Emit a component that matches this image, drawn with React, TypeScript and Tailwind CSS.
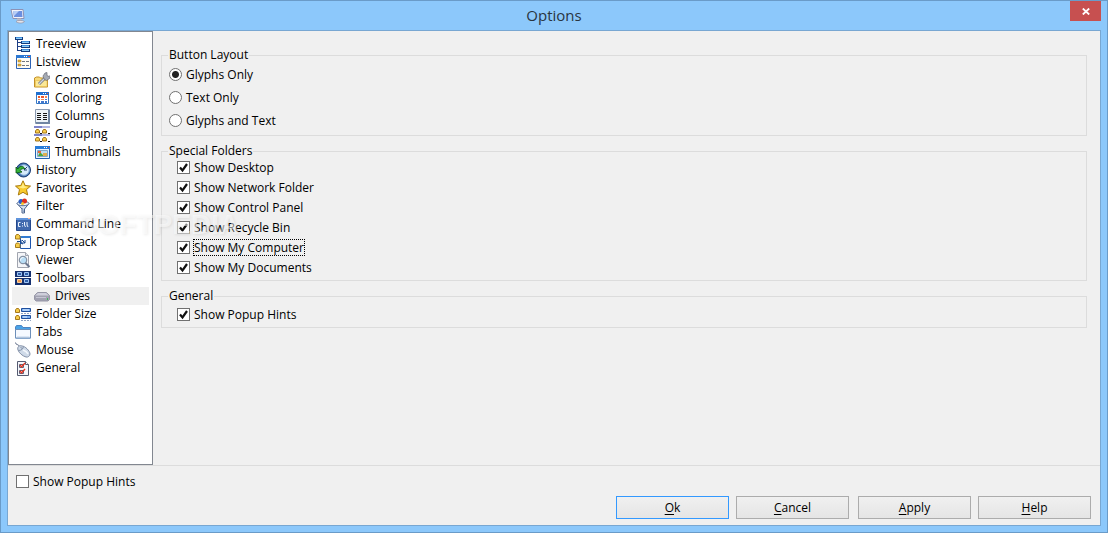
import React, { useState } from 'react';

const icons: Record<string, React.ReactNode> = {
  treeview: (
    <>
      <path d="M2.500 3v11.500M2 6.500h4M2 10.500h4M2 14.500h4" stroke="#1d3f86" fill="none" />
      <path d="M0 1h8v3H0zM6 5h9v3H6zM6 9h9v3H6zM6 13h9v3H6z" fill="#123a7c" />
      <path d="M1 1h6v1H1zM7 5h7v1H7zM7 9h7v1H7zM7 13h7v1H7z" fill="#3f8ede" />
      <path d="M1 2h6v1H1zM7 6h7v1H7zM7 10h7v1H7zM7 14h7v1H7z" fill="#8ccbf5" />
    </>
  ),
  listview: (
    <>
      <path d="M1.500 1.500h14v13h-14z" fill="#fdfbf4" stroke="#2d62b4" />
      <path d="M1 1h15v3H1z" fill="#2b78d4" />
      <path d="M9 2h1v1H9zM11 2h1v1h-1z" fill="#fff" />
      <path d="M13 2h2v1h-2z" fill="#f0502c" />
      <path d="M3 6h3v2H3zM3 10h3v2H3z" fill="#e8b53a" stroke="#a77e2a" strokeWidth=".5" />
      <path d="M7 7.500h7M7 11.500h7" stroke="#6f7480" strokeDasharray="3 1" />
    </>
  ),
  common: (
    <>
      <path d="M.5 15V6l2-1h3l1 1h7v9z" fill="#f8da78" stroke="#c39128" />
      <path d="M1.500 8.500h11.500v6H1.500z" fill="#fbe896" stroke="#e4b94a" strokeWidth=".6" />
      <path d="m5 12 6-6" stroke="#7c7f86" strokeWidth="3" />
      <path d="m5 12 6-6" stroke="#d0d4dc" strokeWidth="1.300" />
      <path d="M10 7 9 4l2-3 2-.5v3l2 1 1-1-.5 3-3 2z" fill="#a6abb5" stroke="#686c75" strokeWidth=".7" />
    </>
  ),
  coloring: (
    <>
      <path d="M2.500 2.500h12v11h-12z" fill="#fff" stroke="#3678c4" />
      <path d="M2 2h13v3H2z" fill="#1f6fd0" />
      <path d="M9 3h1v1H9zM11 3h1v1h-1z" fill="#fff" />
      <path d="M13 3h1v1h-1zM4 6h2v2H4zM7 6h3v2H7z" fill="#e9582f" />
      <path d="M11 6h2v2h-2zM4 9h2v1H4zM7 9h3v1H7z" fill="#f08557" />
      <path d="M11 9h2v1h-2zM4 11h2v2H4zM7 11h3v2H7zM11 11h2v2h-2z" fill="#4378cd" />
    </>
  ),
  columns: (
    <>
      <path d="M1.500 1.500h14v14h-14z" fill="#eef3f8" stroke="#8b9ab0" />
      <path d="M14 2h2v14H2v-2h12z" fill="#7186a3" />
      <path d="M3 5.500h4M3 7.500h4M3 9.500h4M3 11.500h4M9 5.500h4M9 7.500h4M9 9.500h4M9 11.500h4" stroke="#161616" />
    </>
  ),
  grouping: (
    <>
      <path d="M0 0h16v2H0zM0 8h16v2H0z" fill="#7c82c9" />
      <path d="M8 0h8v2H8zM8 8h8v2H8z" fill="#b3b7e2" />
      <path d="M1.500 7V5l1-1.500h2L5.500 5v2zM8.500 7V5l1-1.500h2l1 1.500v2zM1.500 15v-2l1-1.500h2l1 1.500v2zM8.500 15v-2l1-1.500h2l1 1.500v2z" fill="#f8ce4c" stroke="#a47418" />
      <path d="M6 7.500h2M14 7.500h2M6 15.500h2M14 15.500h2" stroke="#111" />
    </>
  ),
  thumbnails: (
    <>
      <path d="M1.500 2.500h14v12h-14z" fill="#eaf4fd" stroke="#2464b0" />
      <path d="M1 2h15v3H1z" fill="#267bd9" />
      <path d="M10 3h1v1h-1zM12 3h1v1h-1z" fill="#fff" />
      <path d="M14 3h1v1h-1z" fill="#ed5332" />
      <path d="M3.500 6.500h10v6h-10z" fill="#bbdff5" stroke="#83a8c4" />
      <path d="m4 12 2-4 3 3 2-2 2 3z" fill="#4fa43c" />
      <path d="M4 7h3v2H4z" fill="#e8653a" />
      <path d="M9 9h4v3H9z" fill="#e0ae51" />
    </>
  ),
  history: (
    <>
      <circle cx="8.500" cy="8" r="7" fill="#3e6fae" stroke="#1b3c74" />
      <circle cx="9" cy="8" r="5.300" fill="#d6eafa" stroke="#7fa8d4" />
      <path d="M9 8 12 5M9 8h3" stroke="#254272" />
      <path d="M1 5v6l6-1-2-1.500c1-2 3-2 5-1.500C8 3 4 4 3 7z" fill="#34b338" stroke="#08540f" strokeWidth=".8" />
    </>
  ),
  favorites: (
    <>
      <path d="m8 .8 2.200 4.700 5.300.6-4 3.500 1.200 5.400L8 12.300 3.300 15l1.200-5.400-4-3.500 5.300-.6z" fill="#f8ca2c" stroke="#a97a0c" strokeLinejoin="round" />
      <path d="m8 2.500 1.400 3.800 4 .6-5.400 1.700-5.400-1.700 4-.6z" fill="#ffec85" />
    </>
  ),
  filter: (
    <>
      <path d="M2 5.500 7 11v4h2.500v-4L14 5.500z" fill="#dbe5f2" stroke="#4c648c" />
      <ellipse cx="8" cy="5.500" rx="6" ry="2.200" fill="#eef4fb" stroke="#5b7198" />
      <circle cx="6" cy="3.500" r="2.500" fill="#2c60c5" />
      <circle cx="9.500" cy="3" r="2.500" fill="#dd2f20" />
      <circle cx="7.500" cy="5.500" r="1.500" fill="#f7c62b" />
      <path d="m7.500 10 1 4" stroke="#849bc0" />
    </>
  ),
  command: (
    <>
      <path d="M1.500 2.500h14v12h-14z" fill="#416aae" stroke="#24488d" />
      <path d="M1 2h15v2H1z" fill="#6094dc" />
      <path d="M13 2h2v1h-2z" fill="#f2b49a" />
      <path d="M5.500 6.500h-2v4h2M7.500 7v1M7.500 9.500v1M9.500 6v3l1 2M12 6v3l1 2" fill="none" stroke="#eef5ff" />
    </>
  ),
  drop: (
    <>
      <path d="M5.500 2.500h10v12h-10z" fill="#f8fbff" stroke="#1d55ad" />
      <path d="M5 2h11v2H5z" fill="#317bd2" />
      <path d="M.5 5V2l1-1.500h2L5 2v3zM.5 13.500v-3l1-1.500h2L5 10.500v3z" fill="#f6ce4b" stroke="#a67b1b" />
      <path d="M2 7.500h4M6 6v3l2 1M7 6l3 3M10 6v3H6" stroke="#16468f" fill="none" />
    </>
  ),
  viewer: (
    <>
      <path d="M2.500.5h8l3 3v12h-11z" fill="#f5f6f9" stroke="#a1a5af" />
      <path d="M10.500.5v3h3" fill="#dfe3e9" stroke="#a1a5af" />
      <circle cx="8" cy="8" r="3.700" fill="#b9def6" stroke="#8592a4" strokeWidth="1.200" />
      <path d="M5.500 8.500c0-2 1-3 3-3" fill="none" stroke="#fff" />
      <path d="m10.500 11 4 4" stroke="#6a7890" strokeWidth="2" />
    </>
  ),
  toolbars: (
    <>
      <path d="M0 1h16v6H0zM0 8h16v7H0z" fill="#15306f" />
      <path d="M2.500 2.500h4v3h-4zM9.500 2.500h4v3h-4zM9.500 9.500h4v3h-4z" fill="#315fa9" stroke="#a1c7f5" />
      <path d="M2.500 9.500h4v3h-4z" fill="#f19b4d" stroke="#ffd19d" />
    </>
  ),
  drives: (
    <>
      <path d="m.5 7.500 3-3h9l3 3v4L14 13H2L.5 11.500z" fill="#a2a2b1" stroke="#9696a6" />
      <path d="m1 7.500 3-2.500h8l3 2.500z" fill="#cfcfdb" />
      <path d="M2 9.500h10" stroke="#c6c6d3" />
      <path d="M13 10h1v2h-1z" fill="#42b65b" />
    </>
  ),
  folder: (
    <>
      <path d="M.5 6.500V4l1-1.500h2l1 1.500v2.500zM.5 13.500V11l1-1.500h2l1 1.500v2.500z" fill="#f7cd49" stroke="#a6781c" />
      <path d="M6.500 2.500h9v3h-9zM6.500 9.500h9v3h-9z" fill="#7baef0" stroke="#1e4f9e" />
      <path d="M8 4h6M8 11h4" stroke="#e0f0ff" />
      <path d="M6 7.500h10M6 14.500h10" stroke="#92a5c4" strokeDasharray="2 1" />
    </>
  ),
  tabs: (
    <>
      <path d="M.5 14V3l1-1.500h5L8 3.500h7.500V14z" fill="#4aa3e8" stroke="#4c83c1" />
      <path d="M.5 5.500h15v8.500H.5z" fill="#f5f9ff" stroke="#6d8fb9" />
      <path d="M2 12.500h12.500" stroke="#dae6f5" />
    </>
  ),
  mouse: (
    <>
      <path d="M.5.5c0 3 3 1 4 4" fill="none" stroke="#6d7890" />
      <path d="M3 8c-1-3 1-5 4-4 3 0 8 5 8 8 0 2-2 3.500-4 3C7.500 14 4 11 3 8z" fill="#cfdae8" stroke="#8491a8" />
      <path d="M3.500 8.500c3 0 4.500-1.500 5-4M5.500 5l2 2" fill="none" stroke="#8391a7" />
      <path d="M8 8c3 1 4 2 5 4" fill="none" stroke="#f3f7fc" strokeWidth="1.500" />
    </>
  ),
  general: (
    <>
      <path d="M2.500 1.500h8l3 3v11h-11z" fill="#f5f6fb" stroke="#555c72" />
      <path d="M10.500 1.500v3h3" fill="#fff" stroke="#555c72" />
      <path d="M4.500 4.500h4v3h-4zM4.500 10.500h4v3h-4z" fill="#fff" stroke="#5b6278" />
      <path d="m5 5 1.500 2L10 3M5 11l1.500 2L10 9" fill="none" stroke="#e2311d" strokeWidth="1.400" />
    </>
  ),
};

const treeItems = [
  { label: 'Treeview', icon: 'treeview' },
  { label: 'Listview', icon: 'listview' },
  { label: 'Common', icon: 'common', child: true },
  { label: 'Coloring', icon: 'coloring', child: true },
  { label: 'Columns', icon: 'columns', child: true },
  { label: 'Grouping', icon: 'grouping', child: true },
  { label: 'Thumbnails', icon: 'thumbnails', child: true },
  { label: 'History', icon: 'history' },
  { label: 'Favorites', icon: 'favorites' },
  { label: 'Filter', icon: 'filter' },
  { label: 'Command Line', icon: 'command' },
  { label: 'Drop Stack', icon: 'drop' },
  { label: 'Viewer', icon: 'viewer' },
  { label: 'Toolbars', icon: 'toolbars' },
  { label: 'Drives', icon: 'drives', child: true },
  { label: 'Folder Size', icon: 'folder' },
  { label: 'Tabs', icon: 'tabs' },
  { label: 'Mouse', icon: 'mouse' },
  { label: 'General', icon: 'general' },
];

const specialFolders = [
  'Show Desktop',
  'Show Network Folder',
  'Show Control Panel',
  'Show Recycle Bin',
  'Show My Computer',
  'Show My Documents',
];

const Group: React.FC<{ title: string; children: React.ReactNode }> = ({ title, children }) => (
  <fieldset className="min-w-0 border border-[#dcdcdc] pb-[3px]">
    <legend className="ml-1.5 px-px leading-4">{title}</legend>
    {children}
  </fieldset>
);

const Check: React.FC<{ label: string; checked?: boolean; focused?: boolean }> = ({ label, checked, focused }) => {
  const [on, setOn] = useState(!!checked);
  return (
    <label className="flex h-5 w-fit items-center gap-[3px]">
      <span className="grid size-[13px]">
        <input
          type="checkbox"
          checked={on}
          onChange={() => setOn(!on)}
          className="col-start-1 row-start-1 size-[13px] appearance-none border border-[#707070] bg-white outline-none"
        />
        {on && (
          <svg viewBox="0 0 13 13" className="pointer-events-none col-start-1 row-start-1 size-[13px]">
            <path d="m3 6.500 2.500 3L10 3" fill="none" stroke="#111" strokeWidth="2.200" />
          </svg>
        )}
      </span>
      <span className={focused ? 'border border-dotted border-black leading-[15px]' : 'border border-transparent leading-[15px]'}>
        {label}
      </span>
    </label>
  );
};

const DialogButton: React.FC<{ label: string; primary?: boolean }> = ({ label, primary }) => (
  <button
    type="button"
    className={
      'h-[23px] w-[113px] border bg-linear-to-b from-[#f0f0f0] to-[#e5e5e5] leading-5 ' +
      (primary ? 'border-[#3399ff]' : 'border-[#acacac]')
    }
  >
    <span className="underline underline-offset-2">{label[0]}</span>
    {label.slice(1)}
  </button>
);

export default function App() {
  const [selected, setSelected] = useState('Drives');
  const [layout, setLayout] = useState('Glyphs Only');

  return (
    <div className="relative flex min-h-screen flex-col border border-[#6a9bc8] bg-[#8cc8fb] px-1.5 pb-1.5 font-['Open_Sans',sans-serif] text-[12px] text-black">
      <header className="grid h-[29px] grid-cols-[1fr_auto_1fr] items-center">
        <svg viewBox="0 0 16 16" className="ml-[3px] size-4">
          <path d="M1 1.500h12l1 9H3z" fill="#f1f3fb" stroke="#8c91b5" />
          <path d="M3 3h9l.5 6H4z" fill="#6b8fdf" />
          <path d="M3 3h6L4 8z" fill="#b7cdf5" />
          <path d="M7 10.500h4l1 2.500H7z" fill="#bcbdca" />
          <path d="M6 13.500c1-1.500 7-1.500 8.500 0-1 2-7 2-8.500 0z" fill="#e5e5ec" stroke="#8f91a3" strokeWidth=".7" />
        </svg>
        <h1 className="text-[15px] text-[#29353f]">Options</h1>
        <button type="button" aria-label="Close" className="grid h-5 w-[31px] place-items-center self-start justify-self-end bg-[#c75050]">
          <svg viewBox="0 0 8 7" className="h-[7px] w-2">
            <path d="m.8.500 6.400 6M7.200.500l-6.400 6" stroke="#fff" strokeWidth="1.800" />
          </svg>
        </button>
      </header>

      <div className="flex flex-1 flex-col border border-[#78a7d2] bg-[#f0f0f0]">
        <div className="flex flex-1 border-b border-[#dcdcdc]">
          <nav className="w-[145px] shrink-0 border border-[#828790] bg-white p-[3px]">
            <ul>
              {treeItems.map((item) => (
                <li key={item.label}>
                  <button
                    type="button"
                    onClick={() => setSelected(item.label)}
                    className={
                      'flex h-[18px] w-full items-center gap-[5px] text-left leading-4 ' +
                      (item.child ? 'pl-[22px] ' : 'pl-[3px] ') +
                      (selected === item.label ? 'bg-[#f0f0f0]' : '')
                    }
                  >
                    <svg viewBox="0 0 16 16" className="size-4 shrink-0">{icons[item.icon]}</svg>
                    {item.label}
                  </button>
                </li>
              ))}
            </ul>
          </nav>

          <main className="flex flex-1 flex-col gap-[7px] pt-4 pr-[13px] pl-2">
            <Group title="Button Layout">
              {['Glyphs Only', 'Text Only', 'Glyphs and Text'].map((name) => (
                <label key={name} className="ml-[7px] flex h-[23px] w-fit items-center gap-1">
                  <input
                    type="radio"
                    name="layout"
                    checked={layout === name}
                    onChange={() => setLayout(name)}
                    className="size-[13px] appearance-none rounded-full border border-[#707070] bg-white checked:bg-[radial-gradient(circle,#222_3px,#fff_4px)]"
                  />
                  {name}
                </label>
              ))}
            </Group>
            <Group title="Special Folders">
              <div className="-mt-0.5 ml-[15px]">
                {specialFolders.map((name) => (
                  <Check key={name} label={name} checked focused={name === 'Show My Computer'} />
                ))}
              </div>
            </Group>
            <Group title="General">
              <div className="ml-[15px]">
                <Check label="Show Popup Hints" checked />
              </div>
            </Group>
          </main>
        </div>

        <footer className="flex h-[59px] flex-col gap-[5px] pt-[5px] pr-[9px] pl-2">
          <Check label="Show Popup Hints" />
          <div className="flex justify-end gap-[9px]">
            <div className="flex gap-[7px]">
              <DialogButton label="Ok" primary />
              <DialogButton label="Cancel" />
            </div>
            <div className="flex gap-[7px]">
              <DialogButton label="Apply" />
              <DialogButton label="Help" />
            </div>
          </div>
        </footer>
      </div>

      <div className="pointer-events-none absolute top-[208px] left-[78px] font-['Liberation_Sans',sans-serif] text-[28px] leading-8 font-bold text-white/50 [text-shadow:1px_1px_3px_rgba(0,0,0,0.08)]">
        SOFTPEDIA<sup className="text-[12px]">°</sup>
      </div>
    </div>
  );
}
